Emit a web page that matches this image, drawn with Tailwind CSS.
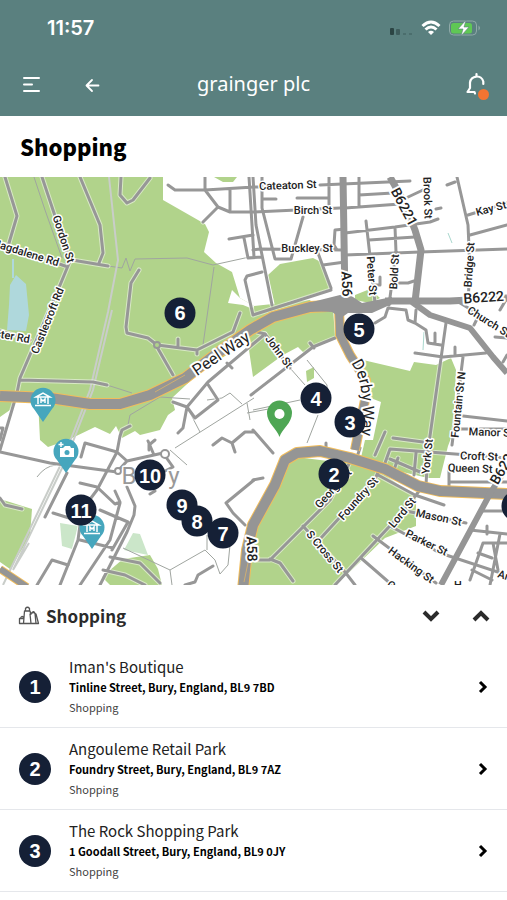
<!DOCTYPE html>
<html lang="en">
<head>
    <meta charset="UTF-8">
    <meta name="viewport" content="width=device-width, initial-scale=1.0">
    <title>Shopping - grainger plc</title>
    <script src="https://cdn.jsdelivr.net/npm/@tailwindcss/browser@4"></script>
</head>
<body class="bg-white min-h-screen font-['Noto_Sans_CJK_SC','Noto_Sans',sans-serif] text-[#222]">
    <header class="bg-[#5a807f] text-white">
        <!-- status bar -->
        <div class="flex items-center justify-between h-14 pl-[47px] pr-[26px]">
            <span class="font-['Inter',sans-serif] font-semibold text-xl leading-6">11:57</span>
            <div class="flex items-center gap-2">
                <svg class="w-6 h-3 mt-2" viewBox="0 0 24 12" fill="#2c4544">
                    <rect x="1" y="2" width="4" height="7" rx="1"/>
                    <rect x="7" y="3" width="4" height="6" rx="1" opacity=".6"/>
                    <rect x="14" y="7" width="3" height="2" opacity=".3"/>
                    <rect x="20" y="7" width="3" height="2" opacity=".3"/>
                </svg>
                <svg class="w-5 h-4" viewBox="0 0 20 16" fill="none" stroke="#fff" stroke-width="3">
                    <path d="M1.500 6Q10-2 18.500 6"/>
                    <path d="M4.500 9.500Q10 4.500 15.500 9.500"/>
                    <path d="M10 15L7 12Q10 9.500 13 12Z" fill="#fff" stroke="none"/>
                </svg>
                <svg class="w-8 h-4" viewBox="0 0 32 16">
                    <rect x=".5" y="1" width="27" height="14" rx="4" fill="none" stroke="#8fa9a8"/>
                    <rect x="2" y="3" width="21" height="10.500" rx="2.500" fill="#5fc755"/>
                    <path d="M29.500 5.500q3 2.500 0 5z" fill="#8fa9a8"/>
                    <path d="M17 0L9 9h5l-2 7 8-9h-5z" fill="#fff" stroke="#5a807f" stroke-width=".6"/>
                </svg>
            </div>
        </div>
        <!-- nav bar -->
        <nav class="grid grid-cols-[1fr_auto_1fr] items-center h-[60px] pb-1 px-[18px]">
            <div class="flex items-center gap-10">
                <button type="button" aria-label="Menu">
                    <svg class="w-6 h-6" viewBox="0 0 24 24" fill="none" stroke="#fff" stroke-width="2" stroke-linecap="round">
                        <path d="M6 6H21M6 12.500H14M6 19H21"/>
                    </svg>
                </button>
                <button type="button" aria-label="Back">
                    <svg class="w-5 h-6" viewBox="0 0 20 24" fill="none" stroke="#fff" stroke-width="1.800" stroke-linecap="round" stroke-linejoin="round">
                        <path d="M16.500 13.500H5M10 8L4.500 13.500L10 19"/>
                    </svg>
                </button>
            </div>
            <a href="#" class="font-['Noto_Sans',sans-serif] text-xl leading-7">grainger plc</a>
            <button type="button" aria-label="Notifications" class="justify-self-end relative">
                <svg class="w-7 h-8" viewBox="0 0 28 32" fill="none" stroke="#fff" stroke-width="2.200" stroke-linecap="round" stroke-linejoin="round">
                    <path d="M14 25.500L13.500 24H6.500l2.500-4V14.500a6.800 6.800 0 0 1 13.300-1V16M15.500 7.500V6"/>
                </svg>
                <span class="absolute right-0 bottom-0 size-[11px] rounded-full bg-[#f37432]"></span>
            </button>
        </nav>
    </header>

    <main>
        <h1 class="px-5 py-[15px] text-[22px] leading-[31px] font-black text-black">Shopping</h1>

        <section id="map" class="relative overflow-hidden" aria-label="Map of Bury">
            <svg class="block w-full h-auto" viewBox="0 177 507 408">
                <!-- parks -->
                <g fill="#b1d38b">
                    <path d="M0 177H163V200L205 224L209 232L204 252L216 263L232 272L240 298L254 306L310 300L318 312L250 340L200 372L172 398L175 410L168 415L160 430L140 435L135 431L122 438L116 426L110 434L95 427L68 440L48 447L40 440L38 400L14 400L10 410L0 417Z"/>
                    <path d="M214 177H237L233 182H223Z"/>
                    <path d="M268 275L280 264L313 258L321 262L330 289L275 306Z"/>
                    <path d="M355 295L370 289L380 298L370 303L355 300Z"/>
                    <path d="M250 334L275 318L333 308L335 337L313 347L304 353L298 347L283 355L253 377L249 350Z"/>
                    <path d="M306 371L314 367V378L307 382Z"/>
                    <path d="M363 360L410 371L414 362L436 365L451 358L456 370L453 433L448 446L440 478H428L360 462L365 440H373L381 402L368 397Z"/>
                    <path d="M286 459L305 455L353 463L385 475L416 497V526L385 538L336 585H245L253 530Z"/>
                    <path d="M0 499L32 509L30 536L10 569L0 562Z"/>
                    <path d="M102 577L123 559L150 555L158 569L162 585H110Z"/>
                </g>
                <path d="M240 298L254 306L253 309L243 305L228 303L232 290Z" fill="#fff"/>
                <path d="M60 523L78 526L72 549L62 546ZM133 533L140 534L148 555L124 550Z" fill="#cbe6c9"/>
                <path d="M10 285L16 275L26 284L29 315L26 331L7 330L9 305ZM12 259H14V278H12Z" fill="#afd8dc"/>
                <path d="M304 453L335 459L328 461L304 458Z" fill="#fff"/>
                <path d="M448 233L452 243M424 332L423 350" stroke="#a9d8ce"/>

                <!-- footpaths -->
                <g fill="none" stroke="#a0a5a0" stroke-width="1">
                    <path d="M34 177L45 210L62 258"/>
                    <path d="M108 266L122 268L126 258L130 271L135 259L187 258L213 265L254 256M214 267L203 345"/>
                    <path d="M290 368L305 385M307 360L327 385V402M253 410L300 400M318 415L307 443M247 413L274 408"/>
                    <path d="M107 385L132 393M128 425L130 415L160 397L190 399M175 448L254 398M207 400L222 398L230 393L242 404M187 407L200 432M247 403L250 420"/>
                    <path d="M123 548L170 570L205 550L215 560L220 574L228 565L230 545M207 535V550M170 570L172 585M170 450L187 465M37 477Q45 466 56 465"/>
                </g>

                <!-- railway -->
                <g fill="none" stroke="#c9cdc9" stroke-width="2">
                    <path d="M109 177L118 260L108 312L90 390L62 462L3 585"/>
                    <path d="M112 310L93 390L65 462L13 570L29 543"/>
                </g>

                <!-- streets: pale casing first, then the road itself -->
                <use href="#streets" stroke="#fff" stroke-opacity=".5" stroke-width="5"/>
                <g stroke="#979797" stroke-width="3">
                    <g id="streets" fill="none" stroke-linecap="round" stroke-linejoin="round">
                        <path d="M5 177L17 216L9 243M42 177L68 255M80 177L100 225L103 253L99 263M121 177L120 195L127 203L133 200L150 178"/>
                        <path d="M0 243L65 266M72 260L108 266M70 261L58 290L20 378L17 393L0 450M20 380L93 382L107 385"/>
                        <path d="M139 270L131 283L126 327L127 333L148 338L157 345L197 350L233 332L240 313M157 347L173 375M178 339V346M197 350V354M0 331L30 340"/>
                        <path d="M168 185L175 190H205L254 187L262 187M205 177V190L218 207L230 212H254L340 208M218 207L203 222M230 190V210M249 177L254 257"/>
                        <path d="M229 239L253 235M244 238L248 258L262 257M262 272L247 276L245 280L253 315L331 290M253 177L256 225L272 305"/>
                        <path d="M262 177V208L275 259H291L303 217M263 199H276M297 198H329M329 177V208M320 185L410 181M253 250L260 249L343 250M318 253L331 288M323 265L345 262M345 229L335 230L334 245L337 250"/>
                        <path d="M359 177V207M359 195L393 193M345 208L400 204M406 198L423 190M345 233L395 227L430 222L438 219M436 209L441 208M366 221L371 265L375 303M369 240L415 237M395 227L396 252L389 305M345 255L420 252L507 249M380 277V285L375 285M395 283L408 283L414 281"/>
                        <path d="M457 177L468 225L470 270L468 300M447 185L455 182M468 215L507 203M470 235L507 225M460 303L475 312"/>
                        <path d="M375 323L385 317L388 308L406 310L408 320L415 323L416 310M415 323L426 330L428 343L441 345M435 333V344M446 323L428 450L426 485M455 347V355M415 353L443 357L486 353M463 357L452 445M474 325L478 317M500 310L507 298M495 337L507 338M503 362L507 355"/>
                        <path d="M463 416L507 421M460 429H507M393 438L423 442M385 432L375 455M251 395L313 347L335 338M310 343L314 348M257 332L265 334L290 368M326 443V449M253 430L273 453M253 480L263 478"/>
                        <path d="M265 334L208 382L187 407L173 402M187 407L183 428L178 433M207 383L218 400L195 418L187 407M227 363L232 368"/>
                        <path d="M350 462L330 500L270 560H255M270 559L280 563L293 581M303 526L345 572L355 585M360 448L356 460M381 466L375 479L320 539M378 475L415 495L444 505M420 490L400 515L335 585"/>
                        <path d="M406 511L466 523M390 526L440 553L507 575M373 536L436 583M361 558L392 585M385 463L390 449L507 458M390 459L420 472M416 453L414 475M398 458L394 470M450 482H507M449 465V488"/>
                        <path d="M480 511H507M470 530L507 534M487 526V534M500 534L490 585M507 543H483L470 580M478 553L492 558M472 570L492 580M493 543L498 570"/>
                        <path d="M0 452L50 463L117 472L127 461L163 453L173 467L165 471M81 457L85 443L117 452L127 461M117 452L120 436L122 430L130 426M117 452L97 490L82 510L78 540L60 585M67 473L45 517M148 441L154 455"/>
                        <path d="M80 483L97 487L115 504L120 502L115 491M120 503L110 540L80 585M127 487L135 506L134 515L127 532L100 585M53 513L82 522M100 510L128 522L112 550M80 540L113 548M37 585L52 560L68 565M110 557L140 563L160 583M103 570L125 575L145 585M150 494L155 491"/>
                        <path d="M155 440L149 445V450M213 445L222 438L232 443L245 432H254M254 480L226 503L233 513L245 525M213 566L198 575L195 582L185 585M0 498L5 505L22 509M232 443L235 452M0 428H3L0 440"/>
                    </g>
                </g>
                <circle cx="165" cy="454" r="4" fill="#fff" stroke="#979797" stroke-width="2"/>
                <circle cx="157" cy="345" r="3" fill="#b1d38b" stroke="#979797" stroke-width="2"/>
                <circle cx="118" cy="471" r="3" fill="#fff" stroke="#979797" stroke-width="2"/>

                <!-- main roads -->
                <g fill="none" stroke-linejoin="round">
                    <g stroke="#f1bd5c">
                        <path stroke-width="12" d="M0 396L50 398L90 404H120L150 395L185 378L215 355L250 330L273 317L310 307L345 305"/>
                        <path stroke-width="10" d="M339 310L340 335L350 355L366 380L365 400L360 425L355 450"/>
                        <path stroke-width="12" d="M243 590L247 550L253 525L275 485L285 460L297 453L320 451L350 458L385 469L418 486L440 491L507 494"/>
                        <path stroke-width="8" d="M0 569L27 587"/>
                    </g>
                    <g stroke="#959595">
                        <path stroke-width="10" d="M0 396L50 398L90 404H120L150 395L185 378L215 355L250 330L273 317L310 307L345 305"/>
                        <path stroke-width="8" d="M339 310L340 335L350 355L366 380L365 400L360 425L355 450"/>
                        <path stroke-width="10" d="M243 590L247 550L253 525L275 485L285 460L297 453L320 451L350 458L385 469L418 486L440 491L507 494"/>
                        <path stroke-width="7" d="M343 177L345 300M390 177L403 200L415 230L421 250L415 302M385 301L450 301L507 298"/>
                        <path stroke-width="6" d="M412 302L430 315L470 328L493 357L507 373M505 470L491 492L441 585M0 569L27 587"/>
                    </g>
                    <path d="M312 302L340 295H350L362 303L392 297V304L372 313H348L341 318L332 312L312 311Z" fill="#959595"/>
                    <path d="M155 392L185 375M244 582L249 558" stroke="#cfae72"/>
                </g>

                <!-- street names -->
                <g font-family="Roboto, sans-serif" font-size="11" font-weight="500" fill="#222" stroke="#fff" stroke-width="3" stroke-linejoin="round" paint-order="stroke" text-anchor="middle">
                    <text transform="translate(288 189) rotate(-2)">Cateaton St</text>
                    <text transform="translate(313 214)">Birch St</text>
                    <text transform="translate(307 252)">Buckley St</text>
                    <text transform="translate(60 240) rotate(72)">Gordon St</text>
                    <text transform="translate(24 256) rotate(17)">Magdalene Rd</text>
                    <text transform="translate(51 322) rotate(-68)">Castlecroft Rd</text>
                    <text transform="translate(12 340) rotate(10)">ster Rd</text>
                    <text transform="translate(368 276) rotate(86)">Peter St</text>
                    <text transform="translate(398 272) rotate(-87)">Bold St</text>
                    <text transform="translate(424 198) rotate(88)">Brook St</text>
                    <text transform="translate(492 212) rotate(-15)">Kay St</text>
                    <text transform="translate(473 265) rotate(-86)">Bridge St</text>
                    <text transform="translate(487 325) rotate(32)">Church St</text>
                    <text transform="translate(276 354) rotate(53)">John St</text>
                    <text transform="translate(462 405) rotate(-84)">Fountain St N</text>
                    <text transform="translate(491 436) rotate(2)">Manor St</text>
                    <text transform="translate(431 457) rotate(-84)">York St</text>
                    <text transform="translate(479 460) rotate(2)">Croft St</text>
                    <text transform="translate(470 472) rotate(2)">Queen St</text>
                    <text transform="translate(438 521) rotate(12)">Mason St</text>
                    <text transform="translate(425 546) rotate(26)">Parker St</text>
                    <text transform="translate(409 568) rotate(36)">Hacking St</text>
                    <text transform="translate(405 515) rotate(-50)">Lord St</text>
                    <text transform="translate(361 501) rotate(-48)">Foundry St</text>
                    <text transform="translate(336 491) rotate(-48)">George St</text>
                    <text transform="translate(322 554) rotate(50)">S Cross St</text>
                    <text transform="translate(386 586) rotate(36)" text-anchor="start">C</text>
                    <text transform="translate(497 577) rotate(18)" text-anchor="start">Ar</text>
                    <text x="458" y="589">H</text>
                    <g font-size="14" stroke-width="4">
                        <text transform="translate(342 284) rotate(88)">A56</text>
                        <text transform="translate(400 209) rotate(62)">B6221</text>
                        <text transform="translate(484 302) rotate(-4)">B6222</text>
                        <text transform="translate(508 468) rotate(-60)">B6221</text>
                        <text transform="translate(247 549) rotate(88)">A58</text>
                        <text transform="translate(224 358) rotate(-34)" font-size="16" font-weight="400">Peel Way</text>
                        <path id="derby" d="M351 363Q367 385 361 440" fill="none" stroke="none"/>
                        <text font-size="16" font-weight="400" text-anchor="start"><textPath href="#derby">Derby Way</textPath></text>
                    </g>
                    <g font-size="24" font-weight="400" fill="#999">
                        <text x="129" y="484">B</text>
                        <text x="174" y="484">y</text>
                    </g>
                </g>

                <!-- landmark pins -->
                <g fill="#46a6bd">
                    <path d="M43 422L34 409A12.500 12.500 0 1 1 52 409Z"/>
                    <path d="M66 473L57 460A12.500 12.500 0 1 1 75 460Z"/>
                    <path d="M92 549L83 536A12.500 12.500 0 1 1 101 536Z"/>
                </g>
                <g fill="none" stroke="#fff" stroke-width="1.500">
                    <path id="museum" d="M36 397L43 393L50 397ZM38 397V404M48 397V404M35 405.500H51M41 403V399L43 401L45 399V403"/>
                    <use href="#museum" x="49" y="128"/>
                </g>
                <path d="M61 448H63L65 446H70L71 448H74V457H60V448Z" fill="#fff"/>
                <circle cx="67" cy="452.500" r="2.500" fill="#46a6bd"/>
                <path d="M61 442V447M58.500 444.500H63.500" stroke="#fff" stroke-width="1.500"/>
                <path d="M279.500 437C277 429 267 423 267 413A12.500 12.500 0 1 1 292 413C292 423 282 429 279.500 437Z" fill="#4ea654"/>
                <circle cx="279.500" cy="414" r="5" fill="#fff"/>
            </svg>
        </section>

        <section>
            <div class="flex items-center justify-between h-[61px] pl-[18px] pr-4">
                <h2 class="flex items-center gap-[6px] text-[17px] leading-6 font-bold text-[#2b2b2b]">
                    <svg class="w-[22px] h-5" viewBox="0 0 22 20" fill="none" stroke="#555" stroke-width="1.300" stroke-linejoin="round">
                        <path d="M5.500 17.500L6.500 5H12L13 9M7.500 5V2.500Q9.500 0 11.500 2.500V5M5.500 17.500H1.500V12.500H6M2.500 12.500Q3.500 9 5.500 11.500M5 17.500H13M13 17.500L12 8L15.500 6.500L18 8L20.500 17.500ZM13.500 7Q16 4 17 7.500L18 17.500"/>
                    </svg>
                    Shopping
                </h2>
                <div class="flex gap-[30px]">
                    <button type="button" aria-label="Next category">
                        <svg class="w-5 h-5" viewBox="0 0 20 20" fill="none" stroke="#2b2b2b" stroke-width="4"><path d="M3 6L10 13L17 6"/></svg>
                    </button>
                    <button type="button" aria-label="Previous category">
                        <svg class="w-5 h-5" viewBox="0 0 20 20" fill="none" stroke="#2b2b2b" stroke-width="4"><path d="M3 14L10 7L17 14"/></svg>
                    </button>
                </div>
            </div>
            <ul id="places"></ul>
        </section>
    </main>

    <script>
        const places = [
            { name: "Iman's Boutique", address: 'Tinline Street, Bury, England, BL9 7BD' },
            { name: 'Angouleme Retail Park', address: 'Foundry Street, Bury, England, BL9 7AZ' },
            { name: 'The Rock Shopping Park', address: '1 Goodall Street, Bury, England, BL9 0JY' },
        ];

        // x / y in the units of the map's viewBox
        const pins = [
            { n: 1, x: 517, y: 506 },
            { n: 2, x: 334, y: 474 },
            { n: 3, x: 350, y: 422 },
            { n: 4, x: 316, y: 398 },
            { n: 5, x: 359, y: 329 },
            { n: 6, x: 180, y: 313 },
            { n: 9, x: 182, y: 505 },
            { n: 8, x: 197, y: 521 },
            { n: 7, x: 223, y: 533 },
            { n: 10, x: 150, y: 475 },
            { n: 11, x: 81, y: 510 },
        ];

        const map = document.getElementById('map');
        pins.forEach(pin => {
            map.insertAdjacentHTML('beforeend', `
                <button type="button" class="absolute -translate-x-1/2 -translate-y-1/2 size-[31px] rounded-full bg-[#152036] text-white font-['Liberation_Sans',sans-serif] font-bold text-xl leading-none"
                    style="left: ${pin.x / 507 * 100}%; top: ${(pin.y - 177) / 408 * 100}%">${pin.n}</button>
            `);
        });

        document.getElementById('places').innerHTML = places.map((place, i) => `
            <li class="border-b border-gray-200">
                <a href="#" class="flex items-center h-[81px] pl-[19px] pr-[18px]">
                    <span class="flex items-center justify-center shrink-0 size-8 rounded-full bg-[#152036] text-white font-['Liberation_Sans',sans-serif] font-bold text-xl leading-none">${i + 1}</span>
                    <span class="flex flex-col grow pl-[18px] pb-1">
                        <span class="text-[15px] leading-6">${place.name}</span>
                        <span class="text-[11px] leading-4 font-bold text-black">${place.address}</span>
                        <span class="text-[11px] leading-4 mt-1 text-[#444]">Shopping</span>
                    </span>
                    <svg class="w-3 h-4" viewBox="0 0 12 16" fill="none" stroke="#000" stroke-width="3"><path d="M3 3L8 8L3 13"/></svg>
                </a>
            </li>
        `).join('');
    </script>
</body>
</html>
